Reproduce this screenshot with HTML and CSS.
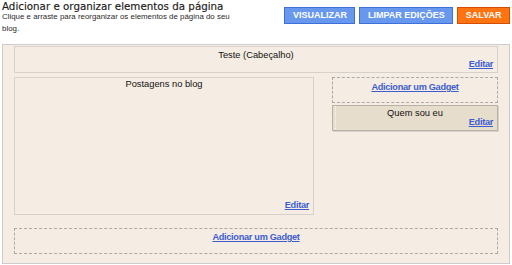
FILE: index.html
```html
<!DOCTYPE html>
<html lang="pt">
<head>
<meta charset="utf-8">
<title>Adicionar e organizar elementos da página</title>
<link rel="stylesheet" href="styles.css">
</head>
<body>
<div class="top">
  <div class="intro">
    <h1 class="title">Adicionar e organizar elementos da página</h1>
    <p class="sub">Clique e arraste para reorganizar os elementos de página do seu blog.</p>
  </div>
  <div class="actions">
    <a class="btn btn-blue" href="#">VISUALIZAR</a>
    <a class="btn btn-blue" href="#">LIMPAR EDIÇÕES</a>
    <a class="btn btn-orange" href="#">SALVAR</a>
  </div>
</div>
<div class="layout">
  <div class="box header-box">
    <div class="box-title">Teste (Cabeçalho)</div>
    <div class="box-edit"><a href="#">Editar</a></div>
  </div>
  <div class="row">
    <div class="box main-box">
      <div class="box-title">Postagens no blog</div>
      <div class="box-edit"><a href="#">Editar</a></div>
    </div>
    <div class="sidebar">
      <div class="add side-add"><a href="#">Adicionar um Gadget</a></div>
      <div class="box widget">
        <div class="box-title">Quem sou eu</div>
        <div class="box-edit"><a href="#">Editar</a></div>
      </div>
    </div>
  </div>
  <div class="add bottom-add"><a href="#">Adicionar um Gadget</a></div>
</div>
</body>
</html>
```
FILE: styles.css
```css
html, body {
  margin: 0;
  padding: 0;
  background: #fff;
}
body {
  font-family: "Liberation Sans", Arial, sans-serif;
  color: #111;
}
.top {
  display: flex;
  justify-content: space-between;
  align-items: flex-start;
  height: 44px;
  padding: 0 2px 0 2px;
  box-sizing: border-box;
}
.intro {
  width: 238px;
}
.title {
  margin: 0;
  padding-top: 1px;
  font-family: "DejaVu Sans", Verdana, sans-serif;
  font-weight: normal;
  font-size: 10.3px;
  line-height: 11px;
  color: #1a1a1a;
  white-space: nowrap;
  -webkit-text-stroke: 0.15px #1a1a1a;
}
.sub {
  margin: -1px 0 0 0;
  font-size: 7.9px;
  line-height: 11.5px;
  color: #2a2a2a;
}
.actions {
  display: flex;
  gap: 4px;
  margin-top: 7px;
}
.btn {
  display: block;
  height: 17px;
  box-sizing: border-box;
  padding: 0 7.5px;
  border: 1px solid;
  font-size: 9px;
  font-weight: bold;
  line-height: 15px;
  color: #fff;
  text-decoration: none;
  white-space: nowrap;
}
.btn-blue {
  background: #6898ee;
  border-color: #3f6fd8;
}
.btn-orange {
  background: #ff7310;
  border-color: #d44e00;
}
.layout {
  margin: 0 2px;
  border: 1px solid #ccc;
  background: #f5ede3;
  padding: 0 11px 9px 11px;
}
.box {
  box-sizing: border-box;
  border: 1px solid #d6d1ca;
  display: flex;
  flex-direction: column;
  justify-content: space-between;
  font-size: 9.3px;
  line-height: 9px;
}
.box-title {
  text-align: center;
}
.box-edit {
  text-align: right;
}
a {
  color: #3d5dcf;
  text-decoration: underline;
}
.box-edit a,
.add a {
  font-size: 9.2px;
  font-weight: bold;
  letter-spacing: -0.3px;
}
.header-box {
  margin-top: 1px;
  height: 27px;
  padding: 4px 4px 3px;
}
.row {
  display: flex;
  justify-content: space-between;
  margin-top: 4px;
}
.main-box {
  width: 300px;
  height: 138px;
  padding: 2px 4px 4px;
}
.sidebar {
  width: 166px;
  display: flex;
  flex-direction: column;
  gap: 2px;
}
.add {
  box-sizing: border-box;
  border: 1px dashed #aaa;
  height: 26px;
  text-align: center;
  line-height: 9px;
}
.side-add {
  padding-top: 2px;
}
.widget {
  height: 26px;
  padding: 3px 4px 3px;
  background-color: #e7ddcc;
  border-color: #b9b1a5;
  box-shadow: 1px 1px 0 #d9d1c5;
  background-image: repeating-linear-gradient(to bottom, #fbf8f2 0 1px, transparent 1px 2px);
  background-size: 1px 100%;
  background-position: 2px 0;
  background-repeat: no-repeat;
}
.bottom-add {
  margin-top: 13px;
  padding-top: 1px;
}
```
